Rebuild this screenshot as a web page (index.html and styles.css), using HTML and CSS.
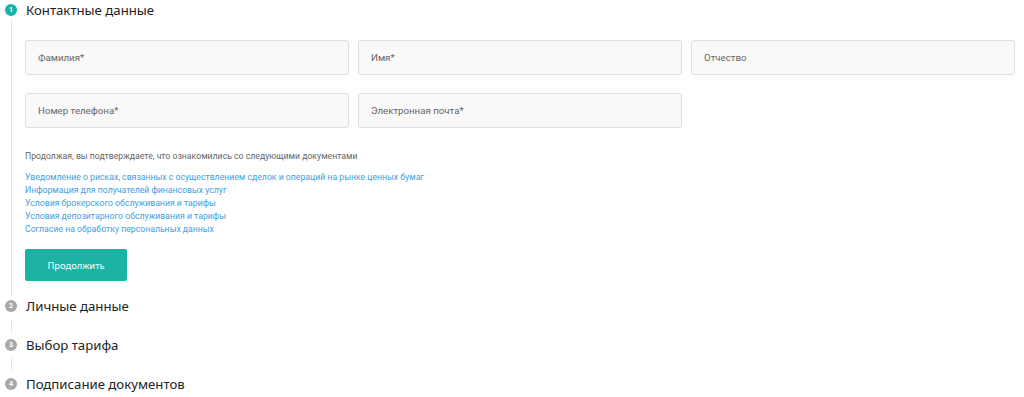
FILE: index.html
```html
<!DOCTYPE html>
<html lang="ru">
<head>
<meta charset="utf-8">
<title>Контактные данные</title>
<link rel="stylesheet" href="styles.css">
</head>
<body>
<div class="steps">
  <div class="step">
    <div class="step-head"><span class="num active">1</span><h2 class="step-title">Контактные данные</h2></div>
    <div class="step-body">
      <div class="fields">
        <input class="field" type="text" placeholder="Фамилия*">
        <input class="field" type="text" placeholder="Имя*">
        <input class="field" type="text" placeholder="Отчество">
        <input class="field" type="text" placeholder="Номер телефона*">
        <input class="field" type="text" placeholder="Электронная почта*">
      </div>
      <p class="note">Продолжая, вы подтверждаете, что ознакомились со следующими документами</p>
      <ul class="docs">
        <li><a href="#">Уведомление о рисках, связанных с осуществлением сделок и операций на рынке ценных бумаг</a></li>
        <li><a href="#">Информация для получателей финансовых услуг</a></li>
        <li><a href="#">Условия брокерского обслуживания и тарифы</a></li>
        <li><a href="#">Условия депозитарного обслуживания и тарифы</a></li>
        <li><a href="#">Согласие на обработку персональных данных</a></li>
      </ul>
      <button class="btn" type="button">Продолжить</button>
    </div>
  </div>
  <div class="step">
    <div class="step-head"><span class="num">2</span><h2 class="step-title">Личные данные</h2></div>
    <div class="connector"></div>
  </div>
  <div class="step">
    <div class="step-head"><span class="num">3</span><h2 class="step-title">Выбор тарифа</h2></div>
    <div class="connector"></div>
  </div>
  <div class="step">
    <div class="step-head"><span class="num">4</span><h2 class="step-title">Подписание документов</h2></div>
  </div>
</div>
</body>
</html>
```
FILE: styles.css
```css
* { box-sizing: border-box; }
html, body { margin: 0; padding: 0; background: #fff; }
body { font-family: Roboto, "Noto Sans", Arial, sans-serif; color: #222; }

.steps { display: flex; flex-direction: column; padding-right: 9px; }

.step-head {
  display: flex;
  align-items: center;
  height: 20px;
  padding-left: 5px;
}
.num {
  width: 12px;
  height: 12px;
  border-radius: 50%;
  background: #a8a8a8;
  color: #fff;
  font-size: 7px;
  font-weight: 700;
  line-height: 12px;
  text-align: center;
  flex: none;
}
.num.active { background: #19b3a5; }
.step-title {
  margin: 0 0 0 9px;
  font-family: "Noto Sans", "Open Sans", sans-serif;
  font-size: 13.2px;
  font-weight: 400;
  color: #222;
}

.step-body {
  margin-left: 11px;
  border-left: 1px solid #e4e4e4;
  padding: 20px 0 15px 13px;
}
.connector {
  margin: 3px 0 3px 11px;
  height: 13px;
  border-left: 1px solid #e4e4e4;
}

.fields {
  display: grid;
  grid-template-columns: repeat(3, 324px);
  column-gap: 9px;
  row-gap: 18px;
}
.field {
  height: 35px;
  background: #f9f9f9;
  border: 1px solid #dedede;
  border-radius: 3px;
  padding: 0 12px;
  font-family: Roboto, Arial, sans-serif;
  font-size: 9.7px;
  color: #333;
  outline: none;
}
.field::placeholder { color: #666; }

.note {
  margin: 22px 0 8px;
  font-size: 8.7px;
  line-height: 13px;
  color: #666;
}
.docs {
  list-style: none;
  margin: 0;
  padding: 0;
}
.docs li { font-size: 8.7px; line-height: 13px; }
.docs a { color: #44a0e0; text-decoration: none; }

.btn {
  display: block;
  margin-top: 13px;
  width: 102px;
  height: 32px;
  border: 0;
  border-radius: 2px;
  background: #1ab3a6;
  color: #fff;
  font-family: "Noto Sans", "Open Sans", sans-serif;
  font-size: 9.4px;
  font-weight: 400;
  cursor: pointer;
}
```
